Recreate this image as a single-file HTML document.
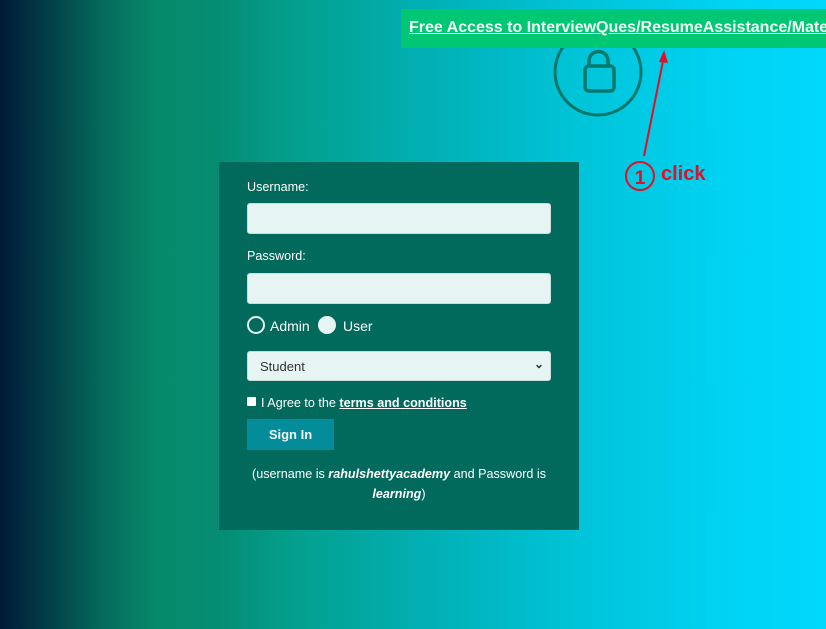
<!DOCTYPE html>
<html><head><style>
*{box-sizing:border-box;margin:0;padding:0}
body{width:826px;height:629px;overflow:hidden;position:relative;font-family:"Liberation Sans",sans-serif;
background:linear-gradient(to right,#001a38 0%,#033f48 6%,#05685a 12%,#068a6a 19%,#058c72 26%,#03a08e 36%,#01b0b5 52%,#00c4d8 70%,#00d4f6 90%,#00d8fc 100%);}
.banner{position:absolute;left:401px;top:9px;width:425px;height:39px;background:#00c774;white-space:nowrap;overflow:hidden}
.banner a{position:absolute;left:8px;top:10px;color:#f2fff8;font-weight:bold;font-size:16px;text-decoration:underline}
.form{position:absolute;left:219px;top:162px;width:360px;height:368px;background:#016a5c;color:#fff;font-size:12.6px}
.lbl{position:absolute;left:28px}
.inp{position:absolute;left:28px;width:304px;height:31px;background:#e6f5f3;border:1px solid #c9dcda;border-radius:3px}
.btn{position:absolute;left:28px;top:257px;width:87px;height:31px;background:#038c9a;color:#f4fbfb;font-weight:bold;font-size:13px;text-align:center;line-height:31px}
</style></head><body>
<svg style="position:absolute;left:0;top:0" width="826" height="629">
<circle cx="598" cy="72" r="43" fill="none" stroke="#03776a" stroke-width="3"/>
<path d="M589 66 v-5 a9.5 9.5 0 0 1 19 0 v5" fill="none" stroke="#03776a" stroke-width="3.5"/>
<rect x="585" y="66" width="29" height="25" rx="4" fill="none" stroke="#03776a" stroke-width="3.5"/>
<line x1="644" y1="156" x2="664" y2="56" stroke="#e0102a" stroke-width="2"/>
<path d="M664 50 l-5 12 l9 1 z" fill="#e0102a"/>
<circle cx="640" cy="176" r="14" fill="none" stroke="#e0102a" stroke-width="2"/>
<text x="640" y="184" text-anchor="middle" font-family="Liberation Sans" font-weight="bold" font-size="19" fill="#e0102a">1</text>
<text x="661" y="180" font-family="Liberation Sans" font-weight="bold" font-size="20" fill="#e0102a">click</text>
</svg>
<div class="banner"><a>Free Access to InterviewQues/ResumeAssistance/Material</a></div>
<div class="form">
<div class="lbl" style="top:18px">Username:</div>
<div class="inp" style="top:41px"></div>
<div class="lbl" style="top:87px">Password:</div>
<div class="inp" style="top:111px"></div>
<div style="position:absolute;left:28px;top:154px;width:18px;height:18px;border-radius:50%;border:2px solid #dff2ee"></div>
<div class="lbl" style="left:51px;top:156px;font-size:14px">Admin</div>
<div style="position:absolute;left:99px;top:154px;width:18px;height:18px;border-radius:50%;background:#e6f5f3"></div>
<div class="lbl" style="left:124px;top:156px;font-size:14px">User</div>
<div class="inp" style="top:189px;height:30px"><span style="position:absolute;left:12px;top:7px;color:#333;font-size:13px">Student</span><span style="position:absolute;right:6px;top:5px;color:#333;font-size:12px;font-weight:bold">&#8964;</span></div>
<div style="position:absolute;left:28px;top:235px;width:9px;height:9px;background:#fff;border-radius:1px"></div>
<div class="lbl" style="left:42px;top:234px">I Agree to the <b style="text-decoration:underline">terms and conditions</b></div>
<div class="btn">Sign In</div>
<div style="position:absolute;left:0;width:360px;top:302px;text-align:center;line-height:20px">(username is <b><i>rahulshettyacademy</i></b> and Password is<br><b><i>learning</i></b>)</div>
</div>
</body></html>
